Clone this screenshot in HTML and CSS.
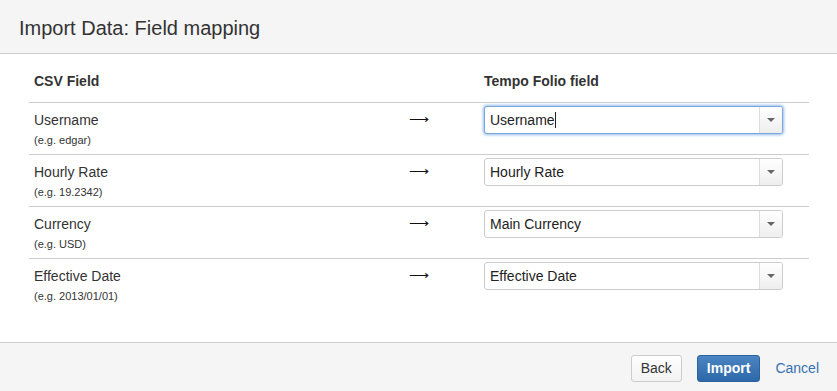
FILE: index.html
```html
<!DOCTYPE html>
<html lang="en">
<head>
    <meta charset="UTF-8">
    <title>Import Data: Field mapping</title>
    <link rel="stylesheet" href="styles.css">
</head>
<body>
    <div class="dialog">
        <div class="dialog-header">
            <h2>Import Data: Field mapping</h2>
        </div>
        <div class="dialog-body">
            <table class="mapping">
                <thead>
                    <tr>
                        <th class="col-csv">CSV Field</th>
                        <th class="col-arrow"></th>
                        <th class="col-target">Tempo Folio field</th>
                    </tr>
                </thead>
                <tbody>
                    <tr>
                        <td>Username<div class="example">(e.g. edgar)</div></td>
                        <td class="arrow">&#10230;</td>
                        <td><div class="select focused"><span class="value">Username<span class="caret"></span></span><span class="drop"><span class="tri"></span></span></div></td>
                    </tr>
                    <tr>
                        <td>Hourly Rate<div class="example">(e.g. 19.2342)</div></td>
                        <td class="arrow">&#10230;</td>
                        <td><div class="select"><span class="value">Hourly Rate</span><span class="drop"><span class="tri"></span></span></div></td>
                    </tr>
                    <tr>
                        <td>Currency<div class="example">(e.g. USD)</div></td>
                        <td class="arrow">&#10230;</td>
                        <td><div class="select"><span class="value">Main Currency</span><span class="drop"><span class="tri"></span></span></div></td>
                    </tr>
                    <tr>
                        <td>Effective Date<div class="example">(e.g. 2013/01/01)</div></td>
                        <td class="arrow">&#10230;</td>
                        <td><div class="select"><span class="value">Effective Date</span><span class="drop"><span class="tri"></span></span></div></td>
                    </tr>
                </tbody>
            </table>
        </div>
        <div class="dialog-footer">
            <button class="btn">Back</button>
            <button class="btn btn-primary">Import</button>
            <a href="#" class="cancel">Cancel</a>
        </div>
    </div>
</body>
</html>
```

FILE: styles.css
```css
body {
    margin: 0;
    padding: 0;
    font-family: "Liberation Sans", Arial, sans-serif;
    color: #333;
    background: #fff;
}

.dialog {
    width: 837px;
    height: 391px;
    display: flex;
    flex-direction: column;
}

.dialog-header {
    height: 53px;
    background: #f5f5f5;
    border-bottom: 1px solid #ccc;
    padding: 0 19px;
    display: flex;
    align-items: center;
}

.dialog-header h2 {
    margin: 0;
    font-size: 20px;
    font-weight: normal;
    color: #333;
    padding-top: 4px;
}

.dialog-body {
    flex: 1;
    padding: 0 28px 0 29px;
}

.mapping {
    width: 100%;
    border-collapse: collapse;
    font-size: 14px;
}

.mapping th {
    text-align: left;
    font-weight: bold;
    font-size: 14px;
    height: 43px;
    padding: 5px 5px 0;
    border-bottom: 1px solid #ccc;
}

.col-csv {
    width: 361px;
}

.col-arrow {
    width: 69px;
}

.mapping td {
    vertical-align: top;
    padding: 7px 5px 0;
    height: 44px;
    border-bottom: 1px solid #ccc;
    line-height: 20px;
}

.mapping tbody tr:last-child td {
    border-bottom: none;
}

.example {
    font-size: 11px;
    line-height: 16px;
    margin-top: 2px;
}

.mapping td.arrow {
    font-size: 14px;
    padding-left: 9px;
    padding-top: 6px;
    color: #111;
}

.mapping td:last-child {
    padding-top: 3px;
}

.select {
    width: 299px;
    height: 28px;
    box-sizing: border-box;
    border: 1px solid #ccc;
    border-radius: 3px;
    background: #fff;
    display: flex;
    font-size: 14px;
}

.select.focused {
    border-color: #7ca6dc;
    box-shadow: 0 0 3px 1px #94bde8;
}

.value {
    flex: 1;
    padding-left: 5px;
    line-height: 26px;
    color: #222;
}

.caret {
    display: inline-block;
    width: 1px;
    height: 16px;
    background: #222;
    vertical-align: -3px;
}

.drop {
    width: 22px;
    border-left: 1px solid #ddd;
    background: linear-gradient(#fff, #eee);
    border-radius: 0 2px 2px 0;
    display: flex;
    align-items: center;
    justify-content: center;
}

.tri {
    width: 0;
    height: 0;
    border-left: 4px solid transparent;
    border-right: 4px solid transparent;
    border-top: 4px solid #666;
}

.dialog-footer {
    height: 49px;
    background: #f5f5f5;
    border-top: 1px solid #ccc;
    display: flex;
    align-items: center;
    justify-content: flex-end;
    padding-right: 18px;
    padding-top: 2px;
    box-sizing: border-box;
}

.btn {
    font-family: "Liberation Sans", Arial, sans-serif;
    font-size: 14px;
    height: 27px;
    padding: 0 9px;
    border: 1px solid #ccc;
    border-radius: 3px;
    background: linear-gradient(#fff, #f2f2f2);
    color: #333;
    margin-right: 15px;
}

.btn-primary {
    background: linear-gradient(#4a84c2, #2d68a8);
    border-color: #2a62a0;
    color: #fff;
    font-weight: bold;
    padding: 0 9px;
}

.cancel {
    color: #3572b0;
    text-decoration: none;
    font-size: 14px;
}
```
